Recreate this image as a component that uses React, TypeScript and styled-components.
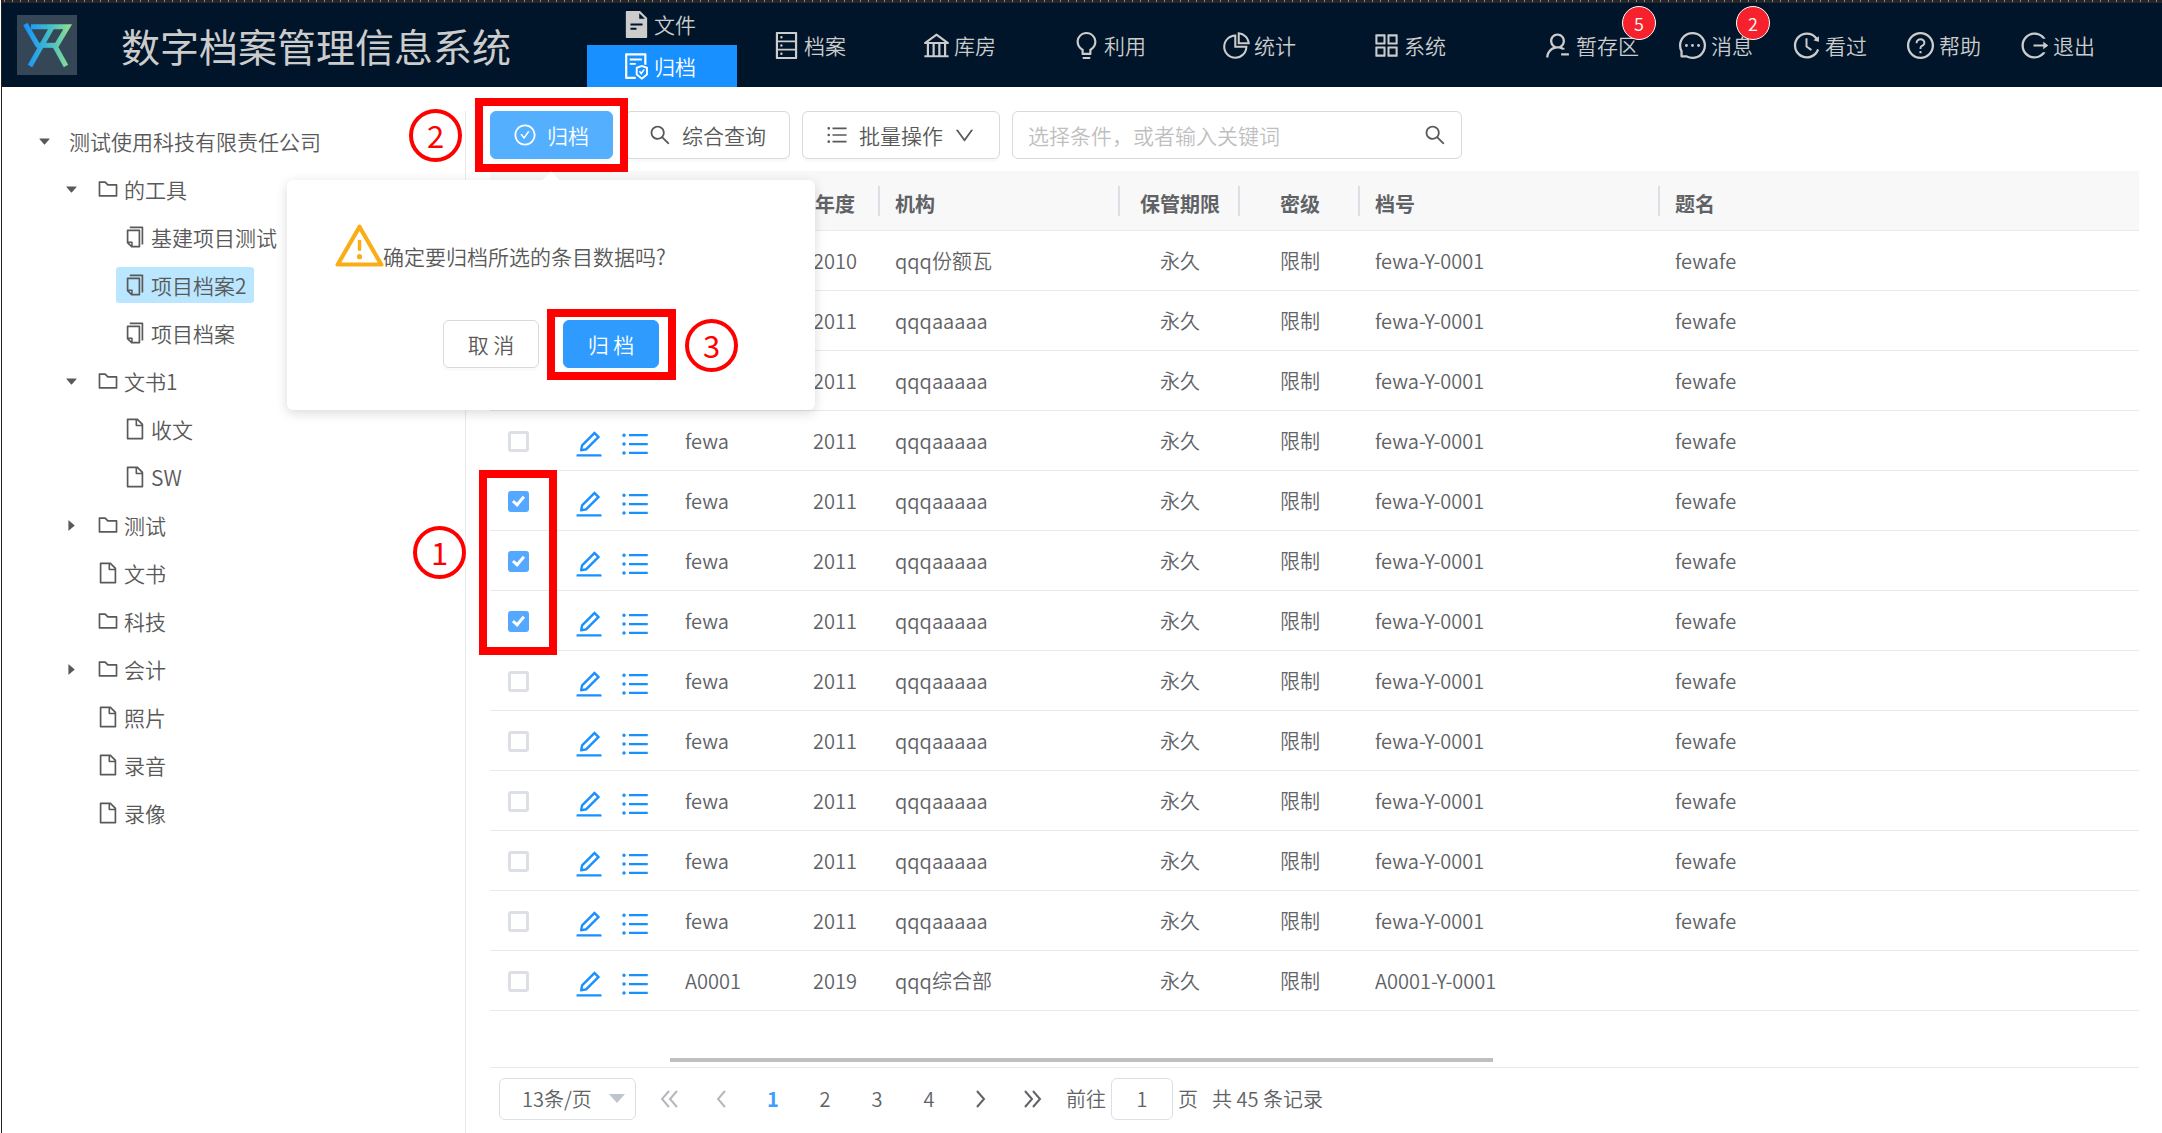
import React, { useState } from "react";
import styled, { createGlobalStyle, css } from "styled-components";
import {
  AiFillCaretDown,
  AiFillCaretRight,
  AiFillFileText,
  AiOutlineAppstore,
  AiOutlineBank,
  AiOutlineBulb,
  AiOutlineCheckCircle,
  AiOutlineCopy,
  AiOutlineDatabase,
  AiOutlineDown,
  AiOutlineEdit,
  AiOutlineFile,
  AiOutlineFileProtect,
  AiOutlineFolder,
  AiOutlineHistory,
  AiOutlineLogout,
  AiOutlineMessage,
  AiOutlinePieChart,
  AiOutlineQuestionCircle,
  AiOutlineSearch,
  AiOutlineUnorderedList,
  AiOutlineUserDelete,
  AiOutlineWarning,
} from "react-icons/ai";

const color = {
  navy: "#001529",
  primary: "#1890ff",
  text: "#595959",
  cell: "#606266",
  line: "#e8eaec",
  border: "#d9d9d9",
  mark: "#ff0000",
};

const Global = createGlobalStyle`
  *, *::before, *::after { box-sizing: border-box; }
  body {
    margin: 0;
    background: #fff;
    color: ${color.text};
    font-family: "Noto Sans CJK SC", sans-serif;
    font-size: 21px;
    font-weight: 350;
    line-height: 32px;
  }
  button, input, select { font: inherit; color: inherit; margin: 0; }
  a { color: inherit; text-decoration: none; }
  svg { flex: none; display: block; }
`;

const Page = styled.div`
  min-height: 100vh;
  display: flex;
  flex-direction: column;
  margin-left: 1px;
  border-left: 1px solid #1c1f24;
  overflow-x: hidden;
`;

const Ruler = styled.div`
  height: 3px;
  background: repeating-linear-gradient(90deg, #8a8a8a 0 1px, transparent 1px 8px) 2px 0 / 100% 2px no-repeat #262626;
`;

/* ---------- header ---------- */

const Header = styled.header`
  display: flex;
  align-items: center;
  height: 84px;
  padding-right: 67px;
  background: ${color.navy};
  color: #cccccc;
  white-space: nowrap;
`;

const Brand = styled.div`
  display: flex;
  align-items: center;
  gap: 44px;
  flex: 0 0 585px;
  padding-left: 15px;
`;

const LogoBox = styled.div`
  width: 60px;
  height: 60px;
  background: #354657;
`;

const Title = styled.h1`
  margin: 0;
  font-size: 39px;
  font-weight: 400;
  line-height: 60px;
`;

const MainNav = styled.nav`
  display: flex;
  align-items: center;
  flex: 1;
`;

const NavStack = styled.div`
  display: flex;
  flex-direction: column;
`;

const NavItem = styled.a<{ $active?: boolean; $half?: boolean }>`
  display: flex;
  align-items: center;
  gap: 2px;
  width: 150px;
  height: ${(p) => (p.$half ? 42 : 84)}px;
  padding-left: 34px;
  ${(p) =>
    p.$active &&
    css`
      background: ${color.primary};
      color: #fff;
    `}
`;

const UserNav = styled.nav`
  display: flex;
  align-items: center;
  gap: 38px;
`;

const UserItem = styled.a`
  display: flex;
  align-items: center;
  gap: 3px;
`;

const BadgeHost = styled.span`
  position: relative;
`;

const Badge = styled.sup`
  position: absolute;
  top: -23px;
  right: -17px;
  width: 34px;
  height: 34px;
  border: 1px solid #fff;
  border-radius: 50%;
  background: #f5222d;
  color: #fff;
  font-size: 18px;
  line-height: 32px;
  text-align: center;
`;

/* ---------- body ---------- */

const Body = styled.div`
  display: flex;
  flex: 1;
  padding-top: 24px;
`;

const Sidebar = styled.aside`
  flex: 0 0 464px;
  padding: 6px 0 0 24px;
  border-right: 1px solid ${color.line};
`;

const Tree = styled.ul`
  margin: 0;
  padding: 0;
  list-style: none;
`;

const TreeRow = styled.li<{ $level: number }>`
  display: flex;
  align-items: center;
  height: 48px;
  padding-left: ${(p) => p.$level * 27}px;
`;

const Switcher = styled.button`
  display: flex;
  align-items: center;
  justify-content: center;
  width: 36px;
  height: 36px;
  padding: 0;
  border: 0;
  background: none;
`;

const SwitcherGap = styled.span`
  width: 36px;
`;

const TreeNode = styled.a<{ $selected?: boolean }>`
  display: flex;
  align-items: center;
  gap: 4px;
  height: 36px;
  padding: 0 7px;
  border-radius: 3px;
  background: ${(p) => (p.$selected ? "#bae7ff" : "transparent")};
`;

const Main = styled.main`
  flex: 1;
  min-width: 0;
  padding: 0 23px 0 24px;
`;

const Toolbar = styled.div`
  display: flex;
  gap: 12px;
  height: 48px;
`;

const Anchor = styled.div`
  position: relative;
  display: flex;
`;

const Button = styled.button<{ $tone?: "light" | "strong"; $dialog?: boolean }>`
  display: flex;
  align-items: center;
  justify-content: center;
  gap: 10px;
  height: 48px;
  padding: 0 23px 0 22px;
  border: 1px solid ${color.border};
  border-radius: 6px;
  background: #fff;
  box-shadow: 0 3px 0 rgba(0, 0, 0, 0.02);
  white-space: nowrap;
  ${(p) => p.$dialog && "width: 96px; padding: 0;"}
  ${(p) => p.$tone === "light" && "background: #54b0ff; border-color: #54b0ff; color: #fff;"}
  ${(p) => p.$tone === "strong" && "background: #2f9bff; border-color: #2f9bff; color: #fff;"}
`;

const SearchBox = styled.label`
  display: flex;
  align-items: center;
  flex: 0 1 450px;
  padding: 0 14px 0 15px;
  border: 1px solid ${color.border};
  border-radius: 6px;
`;

const SearchInput = styled.input`
  flex: 1;
  min-width: 0;
  padding: 0;
  border: 0;
  outline: 0;
  background: none;
  &::placeholder {
    color: #bfbfbf;
    opacity: 1;
  }
`;

/* ---------- confirm bubble ---------- */

const Confirm = styled.div`
  position: absolute;
  z-index: 5;
  top: 69px;
  left: -203px;
  width: 528px;
  padding: 39px 44px 42px 45px;
  border-radius: 6px;
  background: #fff;
  box-shadow: 0 3px 12px rgba(0, 0, 0, 0.15);
  &::before {
    content: "";
    position: absolute;
    top: -6px;
    left: 258px;
    width: 12px;
    height: 12px;
    background: #fff;
    transform: rotate(45deg);
  }
`;

const ConfirmText = styled.div`
  display: flex;
  align-items: flex-end;
  height: 54px;
  white-space: nowrap;
  svg {
    color: #faad14;
    margin-right: -4px;
  }
  span {
    padding-bottom: 1px;
  }
`;

const ConfirmActions = styled.div`
  display: flex;
  gap: 24px;
  margin-top: 47px;
  padding-left: 111px;
`;

/* ---------- annotation marks ---------- */

const MarkFrame = styled.span<{ $inset: string }>`
  position: absolute;
  z-index: 4;
  inset: ${(p) => p.$inset};
  border: 8px solid ${color.mark};
  pointer-events: none;
`;

const ColumnMark = styled(MarkFrame)`
  width: 78px;
  height: 185px;
`;

const MarkNumber = styled.span<{ $left: number; $top: number }>`
  position: absolute;
  z-index: 6;
  left: ${(p) => p.$left}px;
  top: ${(p) => p.$top}px;
  width: 53px;
  height: 53px;
  border: 4px solid ${color.mark};
  border-radius: 50%;
  color: ${color.mark};
  font-size: 31px;
  font-weight: 400;
  line-height: 43px;
  text-align: center;
`;

/* ---------- table ---------- */

const TableArea = styled.div`
  position: relative;
  margin-top: 12px;
`;

const Table = styled.table`
  width: 100%;
  table-layout: fixed;
  border-collapse: separate;
  border-spacing: 0;
  color: ${color.cell};
  font-size: 20px;
`;

const Th = styled.th<{ $center?: boolean; $divider?: boolean }>`
  height: 60px;
  padding: 7px 15px 0;
  border-bottom: 1px solid ${color.line};
  background: ${(p) =>
    p.$divider
      ? "linear-gradient(#dcdfe6, #dcdfe6) right 0 top 15px / 2px 30px no-repeat #f8f8f8"
      : "#f8f8f8"};
  font-weight: 700;
  text-align: ${(p) => (p.$center ? "center" : "left")};
  white-space: nowrap;
`;

const Td = styled.td<{ $center?: boolean }>`
  height: 60px;
  padding: 1px 15px 0;
  border-bottom: 1px solid ${color.line};
  text-align: ${(p) => (p.$center ? "center" : "left")};
  white-space: nowrap;
`;

const CheckTd = styled(Td)`
  padding: 1px 0 0 18px;
`;

const ActionTd = styled(Td)`
  padding: 6px 0 0 23px;
`;

const Check = styled.input.attrs({ type: "checkbox" })`
  appearance: none;
  display: block;
  position: relative;
  width: 21px;
  height: 21px;
  border: 3px solid #dcdfe6;
  border-radius: 3px;
  background: #fff;
  &:checked {
    border-color: #54a8ff;
    background: #54a8ff;
  }
  &:checked::after {
    content: "";
    position: absolute;
    left: 4px;
    top: 0;
    width: 7px;
    height: 12px;
    border: solid #fff;
    border-width: 0 3px 3px 0;
    transform: rotate(40deg);
  }
`;

const RowActions = styled.div`
  display: flex;
  gap: 14px;
`;

const IconButton = styled.button`
  display: flex;
  padding: 0;
  border: 0;
  background: none;
  color: ${color.primary};
`;

const ScrollTrack = styled.div`
  padding: 47px 0 5px 180px;
  border-bottom: 1px solid ${color.line};
`;

const ScrollThumb = styled.div`
  width: 56%;
  height: 4px;
  background: #bfbfbf;
`;

/* ---------- pagination ---------- */

const Pager = styled.div`
  display: flex;
  align-items: center;
  gap: 7px;
  height: 61px;
  padding-left: 9px;
  color: ${color.cell};
  font-size: 20px;
  white-space: nowrap;
`;

const SizeBox = styled.div`
  position: relative;
  display: flex;
  svg {
    position: absolute;
    right: 11px;
    top: 16px;
    pointer-events: none;
  }
`;

const SizeSelect = styled.select`
  appearance: none;
  width: 137px;
  height: 42px;
  padding: 0 22px;
  border: 1px solid #dcdfe6;
  border-radius: 6px;
  background: #fff;
`;

const PageButtons = styled.div`
  display: flex;
`;

const PageButton = styled.button<{ $current?: boolean; $dim?: boolean }>`
  display: flex;
  align-items: center;
  justify-content: center;
  width: 52px;
  height: 42px;
  padding: 0;
  border: 0;
  background: none;
  color: ${(p) => (p.$current ? "#409eff" : p.$dim ? "#b4b7bd" : color.cell)};
  font-weight: ${(p) => (p.$current ? 700 : "inherit")};
`;

const Jump = styled.label`
  display: flex;
  align-items: center;
  gap: 5px;
`;

const JumpInput = styled.input`
  width: 62px;
  height: 42px;
  padding: 0;
  border: 1px solid #dcdfe6;
  border-radius: 6px;
  text-align: center;
`;

const Total = styled.span`
  padding-left: 7px;
`;

/* ---------- data ---------- */

const navItems = [
  { label: "档案", Icon: AiOutlineDatabase },
  { label: "库房", Icon: AiOutlineBank },
  { label: "利用", Icon: AiOutlineBulb },
  { label: "统计", Icon: AiOutlinePieChart },
  { label: "系统", Icon: AiOutlineAppstore },
];

const userItems = [
  { label: "暂存区", Icon: AiOutlineUserDelete, count: 5 },
  { label: "消息", Icon: AiOutlineMessage, count: 2 },
  { label: "看过", Icon: AiOutlineHistory },
  { label: "帮助", Icon: AiOutlineQuestionCircle },
  { label: "退出", Icon: AiOutlineLogout },
];

type Node = {
  label: string;
  level: number;
  open?: boolean;
  Icon?: React.ComponentType<{ size?: number }>;
  selected?: boolean;
};

const tree: Node[] = [
  { label: "测试使用科技有限责任公司", level: 0, open: true },
  { label: "的工具", level: 1, open: true, Icon: AiOutlineFolder },
  { label: "基建项目测试", level: 2, Icon: AiOutlineCopy },
  { label: "项目档案2", level: 2, Icon: AiOutlineCopy, selected: true },
  { label: "项目档案", level: 2, Icon: AiOutlineCopy },
  { label: "文书1", level: 1, open: true, Icon: AiOutlineFolder },
  { label: "收文", level: 2, Icon: AiOutlineFile },
  { label: "SW", level: 2, Icon: AiOutlineFile },
  { label: "测试", level: 1, open: false, Icon: AiOutlineFolder },
  { label: "文书", level: 1, Icon: AiOutlineFile },
  { label: "科技", level: 1, Icon: AiOutlineFolder },
  { label: "会计", level: 1, open: false, Icon: AiOutlineFolder },
  { label: "照片", level: 1, Icon: AiOutlineFile },
  { label: "录音", level: 1, Icon: AiOutlineFile },
  { label: "录像", level: 1, Icon: AiOutlineFile },
];

type Row = { code: string; year: string; org: string; no: string; title: string };

const common: Row = { code: "fewa", year: "2011", org: "qqqaaaaa", no: "fewa-Y-0001", title: "fewafe" };

const rows: Row[] = [
  { ...common, year: "2010", org: "qqq份额瓦" },
  ...Array.from({ length: 11 }, () => common),
  { code: "A0001", year: "2019", org: "qqq综合部", no: "A0001-Y-0001", title: "" },
];

function Logo() {
  return (
    <svg viewBox="0 0 180 180" width="60" height="60" aria-hidden="true">
      <defs>
        <linearGradient id="brand" gradientUnits="userSpaceOnUse" x1="20" y1="90" x2="160" y2="90">
          <stop offset="0" stopColor="#1890ff" />
          <stop offset="0.5" stopColor="#3bb9cf" />
          <stop offset="1" stopColor="#8fe08c" />
        </linearGradient>
      </defs>
      <g fill="none" stroke="url(#brand)" strokeWidth="15">
        <path d="M25 27 63 92" />
        <path d="M42 35H152L117 94" />
        <path d="M104 38 39 153" />
        <path d="M58 91H120" />
        <path d="M112 90 147 153" />
      </g>
    </svg>
  );
}

function Chevrons({ back, double }: { back?: boolean; double?: boolean }) {
  const one = back ? "M12 4 5 12l7 8" : "M4 4l7 8-7 8";
  const two = back ? "M20 4l-7 8 7 8" : "M12 4l7 8-7 8";
  return (
    <svg
      width={double ? 24 : 16}
      height="24"
      viewBox={double ? "0 0 24 24" : "0 0 16 24"}
      fill="none"
      stroke="currentColor"
      strokeWidth="2"
      aria-hidden="true"
    >
      <path d={one} />
      {double && <path d={two} />}
    </svg>
  );
}

export default function App() {
  const [checked, setChecked] = useState<number[]>([4, 5, 6]);
  const toggle = (i: number) =>
    setChecked((list) => (list.includes(i) ? list.filter((n) => n !== i) : [...list, i]));

  return (
    <Page>
      <Global />
      <Ruler />
      <Header>
        <Brand>
          <LogoBox>
            <Logo />
          </LogoBox>
          <Title>数字档案管理信息系统</Title>
        </Brand>
        <MainNav>
          <NavStack>
            <NavItem href="#" $half>
              <AiFillFileText size={31} />
              文件
            </NavItem>
            <NavItem href="#" $half $active>
              <AiOutlineFileProtect size={31} />
              归档
            </NavItem>
          </NavStack>
          {navItems.map(({ label, Icon }) => (
            <NavItem href="#" key={label}>
              <Icon size={31} />
              {label}
            </NavItem>
          ))}
        </MainNav>
        <UserNav>
          {userItems.map(({ label, Icon, count }) => (
            <UserItem href="#" key={label}>
              <Icon size={31} />
              <BadgeHost>
                {label}
                {count && <Badge>{count}</Badge>}
              </BadgeHost>
            </UserItem>
          ))}
        </UserNav>
      </Header>

      <Body>
        <Sidebar>
          <Tree>
            {tree.map(({ label, level, open, Icon, selected }) => (
              <TreeRow key={label} $level={level}>
                {open === undefined ? (
                  <SwitcherGap />
                ) : (
                  <Switcher aria-label={open ? "收起" : "展开"}>
                    {open ? <AiFillCaretDown size={15} /> : <AiFillCaretRight size={15} />}
                  </Switcher>
                )}
                <TreeNode href="#" $selected={selected}>
                  {Icon && <Icon size={24} />}
                  {label}
                </TreeNode>
              </TreeRow>
            ))}
          </Tree>
        </Sidebar>

        <Main>
          <Toolbar>
            <Anchor>
              <Button $tone="light">
                <AiOutlineCheckCircle size={24} />
                归档
              </Button>
              <MarkFrame $inset="-13px -15px" />
              <MarkNumber $left={-81} $top={-2}>2</MarkNumber>
              <Confirm role="dialog" aria-label="归档">
                <ConfirmText>
                  <AiOutlineWarning size={55} />
                  <span>确定要归档所选的条目数据吗?</span>
                </ConfirmText>
                <ConfirmActions>
                  <Button $dialog>取 消</Button>
                  <Anchor>
                    <Button $dialog $tone="strong">归 档</Button>
                    <MarkFrame $inset="-11px -17px -12px -16px" />
                    <MarkNumber $left={122} $top={-1}>3</MarkNumber>
                  </Anchor>
                </ConfirmActions>
              </Confirm>
            </Anchor>
            <Button>
              <AiOutlineSearch size={24} />
              综合查询
            </Button>
            <Button>
              <AiOutlineUnorderedList size={24} />
              批量操作
              <AiOutlineDown size={23} />
            </Button>
            <SearchBox>
              <SearchInput placeholder="选择条件，或者输入关键词" aria-label="搜索" />
              <AiOutlineSearch size={24} />
            </SearchBox>
          </Toolbar>

          <TableArea>
            <Table>
              <colgroup>
                <col style={{ width: 60 }} />
                <col style={{ width: 120 }} />
                <col style={{ width: 120 }} />
                <col style={{ width: 90 }} />
                <col style={{ width: 240 }} />
                <col style={{ width: 120 }} />
                <col style={{ width: 120 }} />
                <col style={{ width: 300 }} />
                <col />
              </colgroup>
              <thead>
                <tr>
                  <Th />
                  <Th />
                  <Th />
                  <Th $center $divider>年度</Th>
                  <Th $divider>机构</Th>
                  <Th $center $divider>保管期限</Th>
                  <Th $center $divider>密级</Th>
                  <Th $divider>档号</Th>
                  <Th>题名</Th>
                </tr>
              </thead>
              <tbody>
                {rows.map((row, i) => (
                  <tr key={i}>
                    <CheckTd>
                      <Check
                        checked={checked.includes(i)}
                        onChange={() => toggle(i)}
                        aria-label={`选择第 ${i + 1} 行`}
                      />
                    </CheckTd>
                    <ActionTd>
                      <RowActions>
                        <IconButton aria-label="编辑">
                          <AiOutlineEdit size={32} />
                        </IconButton>
                        <IconButton aria-label="详情">
                          <AiOutlineUnorderedList size={32} />
                        </IconButton>
                      </RowActions>
                    </ActionTd>
                    <Td>{row.code}</Td>
                    <Td $center>{row.year}</Td>
                    <Td>{row.org}</Td>
                    <Td $center>永久</Td>
                    <Td $center>限制</Td>
                    <Td>{row.no}</Td>
                    <Td>{row.title}</Td>
                  </tr>
                ))}
              </tbody>
            </Table>
            <ColumnMark $inset="299px auto auto -11px" />
            <MarkNumber $left={-77} $top={355}>1</MarkNumber>
          </TableArea>

          <ScrollTrack>
            <ScrollThumb />
          </ScrollTrack>

          <Pager>
            <SizeBox>
              <SizeSelect aria-label="每页条数" defaultValue="13">
                <option value="13">13条/页</option>
                <option value="20">20条/页</option>
              </SizeSelect>
              <svg width="16" height="10" viewBox="0 0 16 10" aria-hidden="true">
                <path d="M0 0h16L8 9z" fill="#c0c4cc" />
              </svg>
            </SizeBox>
            <PageButtons>
              <PageButton $dim aria-label="首页"><Chevrons back double /></PageButton>
              <PageButton $dim aria-label="上一页"><Chevrons back /></PageButton>
              <PageButton $current>1</PageButton>
              <PageButton>2</PageButton>
              <PageButton>3</PageButton>
              <PageButton>4</PageButton>
              <PageButton aria-label="下一页"><Chevrons /></PageButton>
              <PageButton aria-label="末页"><Chevrons double /></PageButton>
            </PageButtons>
            <Jump>
              前往
              <JumpInput defaultValue="1" />
              页
            </Jump>
            <Total>共 45 条记录</Total>
          </Pager>
        </Main>
      </Body>
    </Page>
  );
}
